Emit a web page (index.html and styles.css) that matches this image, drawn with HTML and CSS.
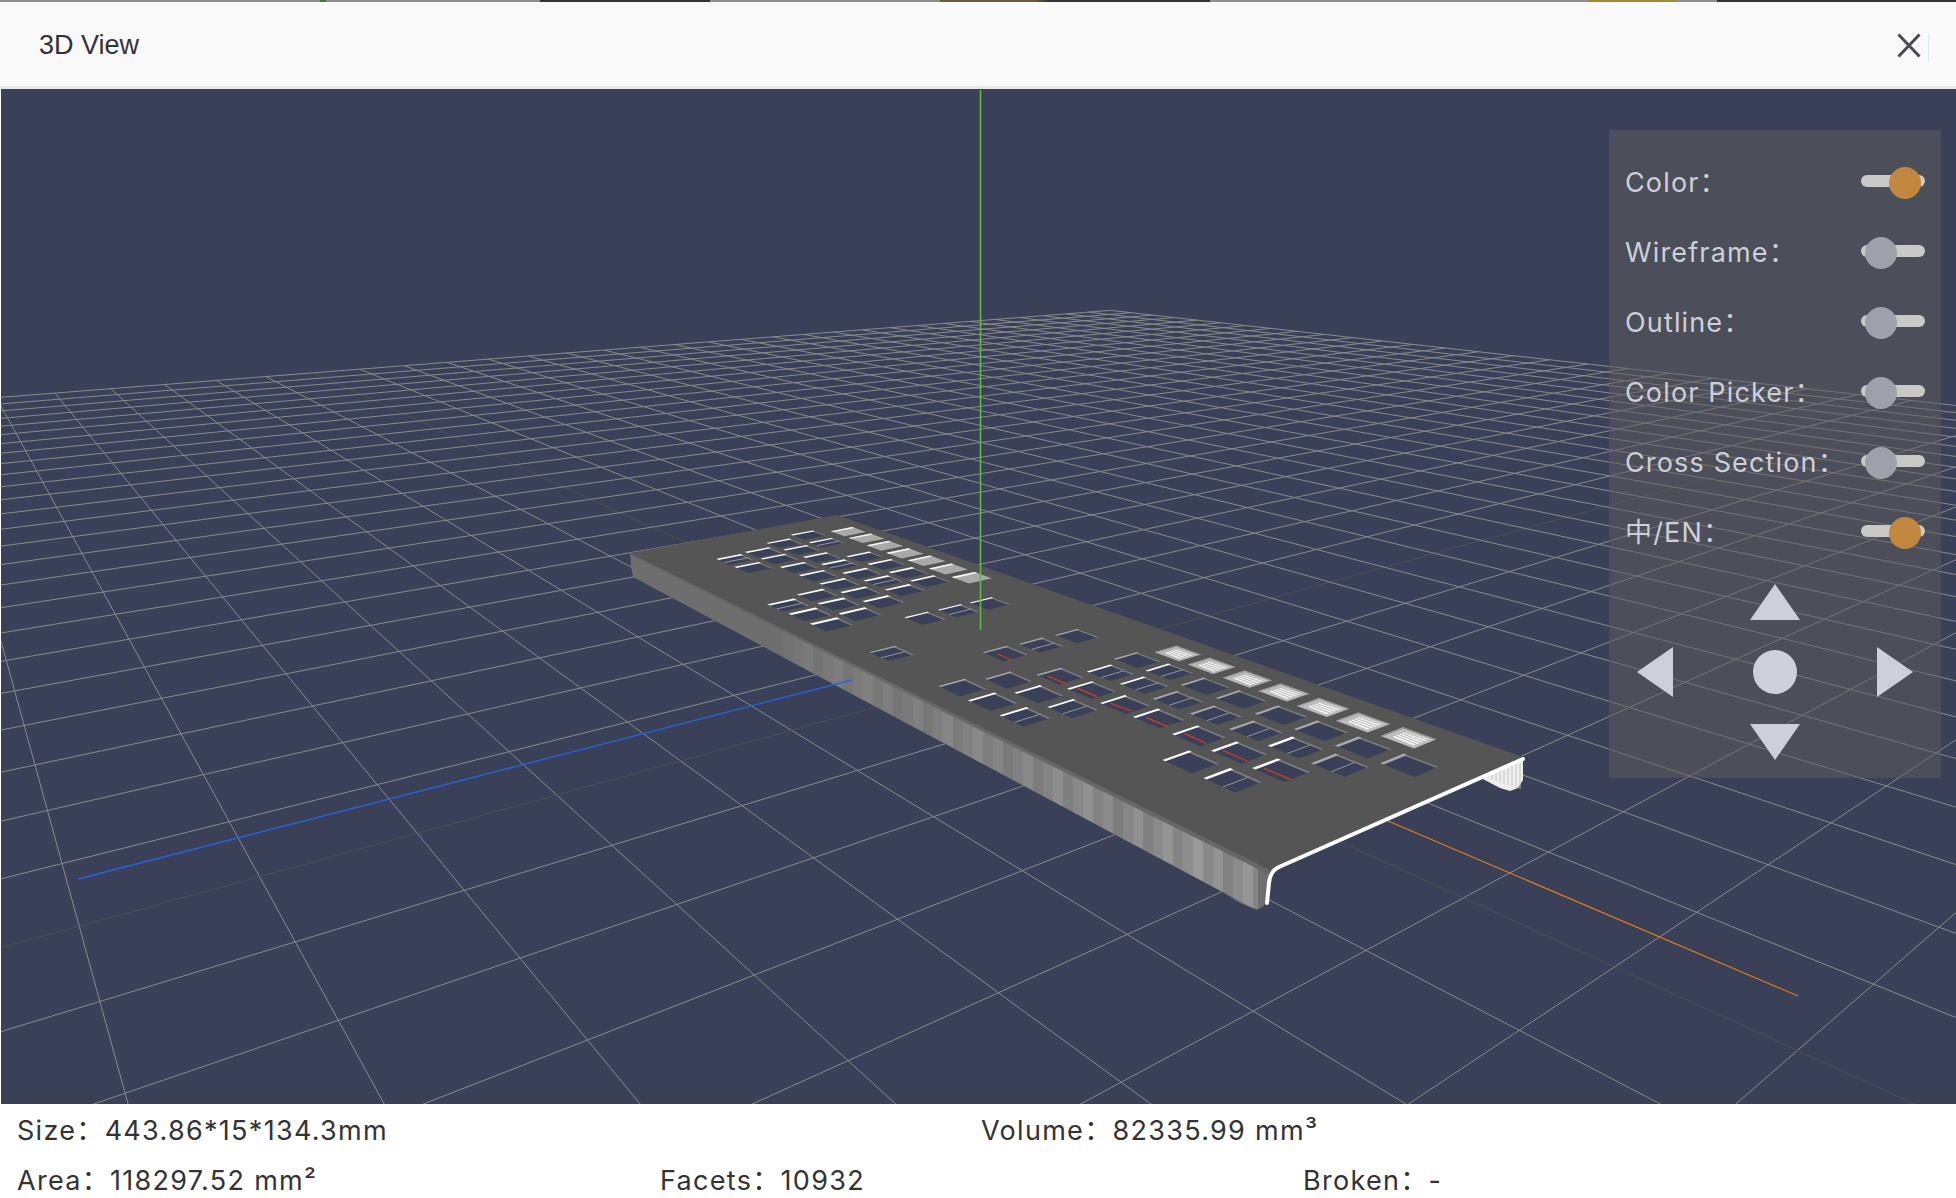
FILE: index.html
```html
<!DOCTYPE html>
<html lang="en">
<head>
<meta charset="utf-8">
<title>3D View</title>
<link rel="stylesheet" href="styles.css">
</head>
<body>
<div class="app">
  <div class="top-strip"></div>
  <header class="header">
    <h1 class="title">3D View</h1>
    <button class="close" aria-label="Close">
      <svg class="close-icon" viewBox="0 0 24 25"><path d="M1.5 1.5 L22.5 23.5 M22.5 1.5 L1.5 23.5"/></svg>
    </button>
    <span class="close-mark"></span>
  </header>
  <main class="stage">
    <svg id="scene" class="scene" viewBox="1 89 1955 1015" preserveAspectRatio="none"></svg>
    <aside class="panel">
      <div class="row"><span class="label">Color：</span><span class="switch on"></span></div>
      <div class="row"><span class="label">Wireframe：</span><span class="switch"></span></div>
      <div class="row"><span class="label">Outline：</span><span class="switch"></span></div>
      <div class="row"><span class="label">Color Picker：</span><span class="switch"></span></div>
      <div class="row"><span class="label">Cross Section：</span><span class="switch"></span></div>
      <div class="row"><span class="label">中/EN：</span><span class="switch on"></span></div>
      <div class="pad">
        <span class="arrow up"></span>
        <span class="arrow left"></span>
        <span class="dot"></span>
        <span class="arrow right"></span>
        <span class="arrow down"></span>
      </div>
    </aside>
  </main>
  <footer class="status">
    <div class="status-row first">
      <span class="stat">Size：<span class="val">443.86*15*134.3mm</span></span>
      <span class="stat">Volume：<span class="val">82335.99 mm³</span></span>
    </div>
    <div class="status-row second">
      <span class="stat">Area：<span class="val">118297.52 mm²</span></span>
      <span class="stat">Facets：<span class="val">10932</span></span>
      <span class="stat">Broken：<span class="val">-</span></span>
    </div>
  </footer>
</div>
<script src="scene.js"></script>
</body>
</html>
```
FILE: styles.css
```css
* { box-sizing: border-box; }
html, body { margin: 0; height: 100%; background: #fff; overflow: hidden; }
.app { display: flex; flex-direction: column; height: 1198px; width: 1956px; }
.top-strip {
  height: 2px; flex: none;
  background: linear-gradient(90deg,
    #8f8f8f 0 320px, #3f7a34 320px 326px, #8f8f8f 326px 540px, #333 540px 710px,
    #8f8f8f 710px 940px, #6b5a3a 940px 1035px, #333 1050px 1210px, #8f8f8f 1210px 1587px,
    #a08a3c 1587px 1677px, #8f8f8f 1677px 1717px, #333 1717px);
}
.header {
  height: 87px; flex: none; display: flex; align-items: center; justify-content: space-between;
  position: relative; padding: 2px 35px 0 39px;
  background: #f9f9f9; border-bottom: 3px solid #e9e9e9;
}
.title { margin: 0; font: 400 27px/1 "Liberation Sans", Arial, sans-serif; color: #333; }
.close { border: 0; background: none; padding: 0; width: 24px; height: 25px; display: block; }
.close-icon { display: block; width: 24px; height: 25px; fill: none; stroke: #4a4a55; stroke-width: 3; }
.close-mark { position: absolute; left: 1928px; top: 31px; width: 1px; height: 28px; background: #dde8f4; }

.stage { position: relative; flex: none; height: 1015px; margin-left: 1px; background: #394058; overflow: hidden; }
.scene { position: absolute; inset: 0; width: 100%; height: 100%; display: block; }
.grid-line { stroke: #8b8b8b; stroke-width: 1; }
.grid-center { stroke: #4f4f52; stroke-width: 1; }
.axis-x { stroke: #e07a1c; stroke-width: 1.2; }
.axis-z { stroke: #2a62dc; stroke-width: 1.4; }
.axis-y { stroke: #5fb94a; stroke-width: 1.6; }
.plate { fill: #555; }
.flange { fill: #6e6e6e; }
.hole { fill: #394058; }
.edge { fill: none; stroke: #fff; stroke-width: 4; stroke-linecap: round; }
.red-line { stroke: #d83a1c; stroke-width: 1.2; }
.thin-line { stroke: #a9acb5; stroke-width: .8; }

.panel {
  position: absolute; left: 1608px; top: 41px; width: 332px; height: 648px;
  padding: 17px 16px 18px;
  background: rgba(96, 92, 92, .5);
  color: #cdd0d8;
}
.row { display: flex; align-items: center; justify-content: space-between; height: 70px; }
.label {
  font: 400 27px/1 Inter, "Noto Sans CJK SC", sans-serif; letter-spacing: 1.15px; white-space: nowrap;
}
.switch { position: relative; display: block; width: 64px; height: 32px; margin-top: 2px; }
.switch::before {
  content: ""; position: absolute; left: 0; top: 8px; width: 64px; height: 12px;
  border-radius: 6px; background: #cbc9c6;
}
.switch::after {
  content: ""; position: absolute; left: 4px; top: 0; width: 32px; height: 32px;
  border-radius: 50%; background: #9ea1aa;
}
.switch.on::after { left: 28px; background: #c2873f; }

.pad {
  margin: 17px 12px 0;
  display: grid; grid-template-columns: 36px 1fr 36px; grid-template-rows: 36px 50px 36px; gap: 27px 0;
  justify-items: center; align-items: center;
}
.arrow { display: block; background: #cdd0d8; }
.dot { display: block; width: 44px; height: 44px; border-radius: 50%; background: #cdd0d8; grid-column: 2; grid-row: 2; }
.up { grid-column: 2; grid-row: 1; width: 50px; height: 36px; clip-path: polygon(50% 0, 100% 100%, 0 100%); }
.down { grid-column: 2; grid-row: 3; width: 50px; height: 36px; clip-path: polygon(0 0, 100% 0, 50% 100%); }
.left { grid-column: 1; grid-row: 2; width: 36px; height: 50px; clip-path: polygon(100% 0, 100% 100%, 0 50%); }
.right { grid-column: 3; grid-row: 2; width: 36px; height: 50px; clip-path: polygon(0 0, 100% 50%, 0 100%); }

.status { flex: 1; background: #fff; padding: 1px 0 0 17px; color: #333; }
.status-row { display: grid; height: 50px; align-items: center; }
.status-row.first { grid-template-columns: 964px 1fr; }
.status-row.second { grid-template-columns: 643px 643px 1fr; }
.stat { font: 400 27px/1 Inter, "Noto Sans CJK SC", sans-serif; letter-spacing: 1.3px; white-space: nowrap; }
```
FILE: scene.js
```js
(function () {
  var svg = document.getElementById('scene');
  var NS = 'http://www.w3.org/2000/svg';
  function el(name, attrs, cls) {
    var n = document.createElementNS(NS, name);
    for (var k in attrs) n.setAttribute(k, attrs[k]);
    if (cls) n.setAttribute('class', cls);
    svg.appendChild(n);
    return n;
  }
  function line(a, b, cls) { return el('line', { x1: a[0], y1: a[1], x2: b[0], y2: b[1] }, cls); }
  function poly(pts, fill, cls) {
    var attrs = { points: pts.map(function (p) { return p[0].toFixed(1) + ',' + p[1].toFixed(1); }).join(' ') };
    if (fill) attrs.fill = fill;
    return el('polygon', attrs, cls);
  }
  function gray(v) { v = Math.round(v); return 'rgb(' + v + ',' + v + ',' + v + ')'; }

  /* Floor grid: perspective projection measured from the picture. */
  var C = [982, 678], VU = [2800, 178], VV = [-128, 171], A = 0.0474, B = 0.0605, N = 25, MINW = 0.05;
  function floor(u, v) {
    var ua = u * A, vb = v * B, w = 1 + ua + vb;
    return [(C[0] + ua * VU[0] + vb * VV[0]) / w, (C[1] + ua * VU[1] + vb * VV[1]) / w];
  }
  for (var i = -N; i <= N; i++) {
    var cls = i === 0 ? 'grid-center' : 'grid-line';
    var vMin = Math.max(-N, (MINW - 1 - i * A) / B);
    if (vMin < N) line(floor(i, vMin), floor(i, N), cls);
    var uMin = Math.max(-N, (MINW - 1 - i * B) / A);
    if (uMin < N) line(floor(uMin, i), floor(N, i), cls);
  }
  line([980.5, 647], [1798, 996], 'axis-x');

  /* Plate: unit square to image quad. */
  var P0 = [630, 553], P1 = [1270, 870], P2 = [1523, 757], P3 = [837, 515];
  var dx1 = P1[0] - P2[0], dx2 = P3[0] - P2[0], sx = P0[0] - P1[0] + P2[0] - P3[0];
  var dy1 = P1[1] - P2[1], dy2 = P3[1] - P2[1], sy = P0[1] - P1[1] + P2[1] - P3[1];
  var den = dx1 * dy2 - dx2 * dy1;
  var g = (sx * dy2 - dx2 * sy) / den, h = (dx1 * sy - sx * dy1) / den;
  var a = P1[0] - P0[0] + g * P1[0], b = P3[0] - P0[0] + h * P3[0], c = P0[0];
  var d = P1[1] - P0[1] + g * P1[1], e = P3[1] - P0[1] + h * P3[1], f = P0[1];
  function plate(s, t) {
    var w = g * s + h * t + 1;
    return [(a * s + b * t + c) / w, (d * s + e * t + f) / w];
  }
  function unplate(p) {
    var x = p[0], y = p[1];
    var A11 = e - f * h, A12 = c * h - b, A13 = b * f - c * e;
    var A21 = f * g - d, A22 = a - c * g, A23 = c * d - a * f;
    var A31 = d * h - e * g, A32 = b * g - a * h, A33 = a * e - b * d;
    var w = A31 * x + A32 * y + A33;
    return [(A11 * x + A12 * y + A13) / w, (A21 * x + A22 * y + A23) / w];
  }

  /* Side flange with near-vertical facet stripes. */
  poly([P0, [631, 566], [633, 577], [1224, 893], [1240, 903], [1257, 910], [1264, 906], [1267, 896], [1268, 878], P1], null, 'flange');
  var X0 = 783, X1 = 1258, STRIPE = 10;
  function topY(x) { return 553 + (x - 630) * 0.4953; }
  function botY(x) { return 577 + (x - 633) * 0.534; }
  for (var sxp = X0, k = 0; sxp < X1; sxp += STRIPE, k++) {
    var prog = (sxp - X0) / (X1 - X0);
    var noise = ((k * 37) % 11 - 5) * (0.9 + 1.9 * prog);
    var xa = sxp, xb = Math.min(sxp + STRIPE + 0.5, X1);
    poly([[xa, topY(xa)], [xb, topY(xb)], [xb, Math.min(botY(xb), 909)], [xa, botY(xa)]], gray(118 + 26 * prog + noise));
  }
  /* Soft bend into the plate. */
  poly([P0, P1, [1268, 874], [632, 556]], '#676767');

  /* Far flange, seen under the plate's near end. */
  poly([P2, [1523, 780], [1518, 788], [1510, 791], [1500, 788], [1479, 777]], '#eee');
  for (var x = 1484; x < 1522; x += 4) {
    var top = 757 + (1523 - x) * 0.445;
    line([x, top], [x, Math.min(789, 775 + (x - 1479) * 0.35)], '').setAttribute('stroke', '#c6c6c6');
  }

  poly([P0, P1, P2, P3], null, 'plate');

  /* Holes: image centre plus kind. w = white lip, g = grey lip, f = flat lit wall, b = bright wall. */
  function z3(x, y) { return [600 + x / 3, 490 + y / 3]; }
  function z4(x, y) { return [900 + x / 2.376, 600 + y / 3]; }
  var holes = [];
  function add3(list, kind) { list.forEach(function (h) { holes.push({ p: z3(h[0], h[1]), k: kind, l: h[2] }); }); }
  function add4(list, kind) { list.forEach(function (h) { holes.push({ p: z4(h[0], h[1]), k: kind, l: h[2] }); }); }
  add3([[745, 125], [800, 145], [855, 167], [915, 190], [980, 212], [1045, 237], [1115, 263]], 'f');
  add3([[625, 135], [553, 160], [680, 158, 1], [490, 187], [605, 180], [405, 208, 1], [538, 207], [665, 202],
    [795, 200], [460, 232], [597, 232], [720, 224, 1], [860, 223], [655, 257], [785, 250], [925, 248], [718, 282],
    [850, 273, 1], [990, 273], [652, 315], [782, 308], [915, 300], [565, 345, 1], [715, 342], [850, 335], [630, 373],
    [780, 372], [695, 403], [975, 385], [1075, 362, 1], [1170, 340]], 'w');
  add3([[875, 490, 1]], 'g');
  add4([[250, 160], [335, 135, 1], [420, 108]], 'g');
  add4([[660, 160], [740, 197], [825, 237], [912, 277], [1005, 322], [1100, 367], [1208, 413]], 'b');
  add4([[563, 180], [148, 262], [258, 240], [380, 228], [725, 258], [810, 298], [905, 345], [1000, 392], [1100, 442], [1210, 495],
    [660, 300, 1], [750, 345, 1], [845, 392, 1], [1045, 495, 1]], 'g');
  add4([[500, 218, 1], [640, 215, 1], [220, 305], [330, 282], [455, 270], [580, 255, 1], [940, 442, 1],
    [297, 350, 1], [410, 325, 1], [535, 313], [615, 355], [710, 407], [805, 457], [905, 510], [690, 485], [790, 540, 1]], 'w');

  var WALL = 0.01, HS = 0.016;
  holes.forEach(function (hole) {
    var q = unplate(hole.p), s = q[0], t = q[1];
    var far = s < 0.42;
    var HT = far ? 0.055 : 0.05, LIP = far ? 0.0058 : 0.0034;
    var L = plate(s - HS, t - HT), T = plate(s - HS, t + HT), R = plate(s + HS, t + HT), Bt = plate(s + HS, t - HT);
    if (hole.k === 'f') {
      poly([L, T, R, Bt], '#a9a9a9');
      poly([L, T, plate(s - HS + LIP, t + HT), plate(s - HS + LIP, t - HT)], '#f4f4f4');
      return;
    }
    if (hole.k === 'b') {
      var light = 195 + 45 * s;
      var inL = plate(s - HS * 0.55, t - HT * 0.6), inT = plate(s - HS * 0.55, t + HT * 0.6);
      var inR = plate(s + HS * 0.75, t + HT * 0.7), inB = plate(s + HS * 0.75, t - HT * 0.7);
      poly([L, T, R, Bt], gray(light * 0.8));
      poly([inL, inT, inR, inB], gray(light));
      for (var j = 1; j < 9; j++) {
        var m = j / 9;
        line(plate(s - HS * 0.55, t - HT * 0.6 + 2 * HT * 0.6 * m), plate(s + HS * 0.75, t - HT * 0.7 + 2 * HT * 0.7 * m), '')
          .setAttribute('stroke', j % 2 ? '#fafafa' : '#b9b9b9');
      }
      poly([T, R, plate(s + HS, t + HT - WALL * 0.6), plate(s - HS, t + HT - WALL * 0.6)], '#8a8a8a');
      poly([L, T, plate(s - HS + LIP * 0.6, t + HT), plate(s - HS + LIP * 0.6, t - HT)], '#9a9a9a');
      return;
    }
    poly([L, T, R, Bt], null, 'hole');
    if (hole.l) line(plate(s + HS * 0.25, t - HT), plate(s + HS * 0.25, t + HT), 'thin-line');
    poly([T, R, plate(s + HS, t + HT - WALL), plate(s - HS, t + HT - WALL)], '#7c7c7c');
    poly([L, T, plate(s - HS + LIP, t + HT), plate(s - HS + LIP, t - HT)], hole.k === 'w' ? '#fafafa' : '#a8a8a8');
  });

  /* Red slivers inside some holes. */
  [[350, 228, 393, 250], [422, 265, 468, 290], [500, 310, 550, 333], [585, 353, 637, 380], [675, 400, 728, 430],
   [768, 452, 825, 483], [865, 505, 928, 538], [232, 162, 265, 180]].forEach(function (r) {
    line(z4(r[0], r[1]), z4(r[2], r[3]), 'red-line');
  });

  el('path', { d: 'M1523 759 L1279 867 Q1270 871 1269 883 L1267 903' }, 'edge');
  line([980.5, 90], [980.5, 630], 'axis-y');
  line([78, 879], [852, 680], 'axis-z');
})();
```
